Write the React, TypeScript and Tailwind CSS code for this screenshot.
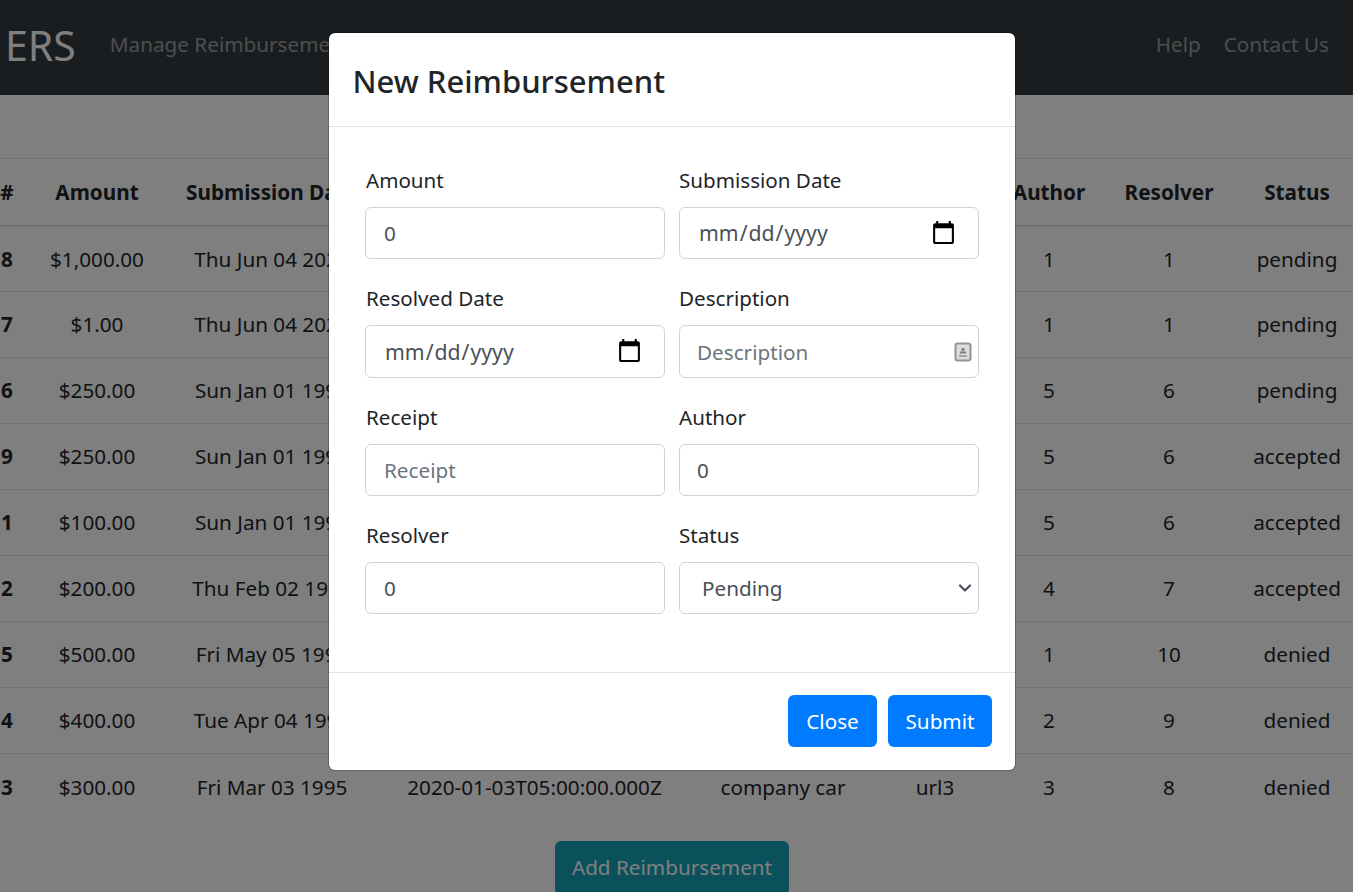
import React from "react";

const widths = [14, 166, 184, 341, 156, 148, 80, 160, 96, 8];
const head = ["#", "Amount", "Submission Date", "Resolved Date", "Description", "Receipt", "Author", "Resolver", "Status", ""];
const rows = [
  ["8", "$1,000.00", "Thu Jun 04 2020", "", "", "", "1", "1", "pending", ""],
  ["7", "$1.00", "Thu Jun 04 2020", "", "", "", "1", "1", "pending", ""],
  ["6", "$250.00", "Sun Jan 01 1995", "", "", "", "5", "6", "pending", ""],
  ["9", "$250.00", "Sun Jan 01 1995", "", "", "", "5", "6", "accepted", ""],
  ["1", "$100.00", "Sun Jan 01 1995", "", "", "", "5", "6", "accepted", ""],
  ["2", "$200.00", "Thu Feb 02 1995", "", "", "", "4", "7", "accepted", ""],
  ["5", "$500.00", "Fri May 05 1995", "", "", "", "1", "10", "denied", ""],
  ["4", "$400.00", "Tue Apr 04 1995", "", "", "", "2", "9", "denied", ""],
  ["3", "$300.00", "Fri Mar 03 1995", "2020-01-03T05:00:00.000Z", "company car", "url3", "3", "8", "denied", ""],
];

const boxCls =
  "block w-[300px] h-[52.2px] rounded-[6px] border border-[#ced4da] bg-white pr-[18px] text-[20.7px] text-[#495057] placeholder:text-[#6c757d] outline-none";
const inputCls = `${boxCls} pl-[18px]`;
const inputTightCls = `${boxCls} pl-[17px]`;
const dateCls =
  "block w-[300px] h-[52.2px] rounded-[6px] border border-[#ced4da] bg-white pl-[18px] pr-[21px] text-[21.2px] text-[#495057] outline-none [&::-webkit-calendar-picker-indicator]:h-[27px] [&::-webkit-calendar-picker-indicator]:w-[27px] [&::-webkit-calendar-picker-indicator]:m-0 [&::-webkit-calendar-picker-indicator]:p-0";

function Field({ label, right, children }: { label: string; right?: boolean; children: React.ReactNode }) {
  return (
    <div className="w-[300px]">
      <div className={`mb-[12px] h-[30px] text-[20.6px] leading-[30px] text-[#212529] ${right ? "" : "pl-px"}`}>{label}</div>
      {children}
    </div>
  );
}

export default function App() {
  return (
    <div className="relative h-[892px] w-[1353px] overflow-hidden bg-white font-['Noto_Sans',sans-serif] text-[20.7px] text-[#212529]">
      <nav className="flex h-[95px] items-center bg-[#343a40] pb-[5px]">
        <span className="ml-[5px] text-[41px] leading-none text-white">ERS</span>
        <a className="ml-[34px] text-white/50">Manage Reimbursements</a>
        <div className="ml-auto mr-[24px] flex gap-[23px] text-white/50">
          <a>Help</a>
          <a>Contact Us</a>
        </div>
      </nav>

      <main className="pt-[63px]">
        <table className="w-[1353px] table-fixed border-collapse text-center">
          <colgroup>
            {widths.map((w, i) => (
              <col key={i} style={{ width: w }} />
            ))}
          </colgroup>
          <thead>
            <tr className="h-[67px] border-y border-b-2 border-[#dee2e6]">
              {head.map((h, i) => (
                <th key={i} className="whitespace-nowrap p-0 pt-[2px] font-bold">
                  {h}
                </th>
              ))}
            </tr>
          </thead>
          <tbody>
            {rows.map((r, i) => (
              <tr key={i} className="h-[66px] border-b border-[#dee2e6] last:border-b-0">
                {r.map((c, j) => (
                  <td key={j} className={`whitespace-nowrap p-0 pt-[1px] ${j === 0 ? "font-bold" : ""}`}>
                    {c}
                  </td>
                ))}
              </tr>
            ))}
          </tbody>
        </table>
        <div className="mt-[21px] flex justify-center">
          <button className="ml-[-9px] h-[54px] w-[234px] rounded-[6px] bg-[#17a2b8] text-white">Add Reimbursement</button>
        </div>
      </main>

      <div className="absolute inset-0 bg-black/50" />

      <div className="absolute left-[329px] top-[33px] flex w-[686px] flex-col rounded-[6px] bg-white shadow-[0_0_0_1px_rgba(0,0,0,0.2)]">
        <header className="flex h-[94px] items-center border-b border-[#dee2e6] pl-[23.5px] pt-[3px]">
          <h5 className="text-[31px] font-medium text-[#212529]">New Reimbursement</h5>
        </header>
        <div className="h-[545px] pl-[36px] pt-[38px]">
          <div className="grid grid-cols-[300px_300px] gap-x-[14px] gap-y-[24.2px]">
            <Field label="Amount">
              <input type="number" readOnly value="0" className={inputCls} />
            </Field>
            <Field label="Submission Date" right>
              <input type="date" className={dateCls} />
            </Field>
            <Field label="Resolved Date">
              <input type="date" className={dateCls} />
            </Field>
            <Field label="Description" right>
              <div className="relative">
                <input placeholder="Description" className={`${inputTightCls} pt-[1px]`} />
                <svg viewBox="0 0 18 20" className="absolute right-[7px] top-[17px] h-[20px] w-[18px]">
                  <rect x="1.5" y="1.5" width="15" height="17" rx="2" fill="#dcdcdc" stroke="#949494" strokeWidth="2" />
                  <circle cx="9" cy="7.5" r="1.7" fill="#808080" />
                  <rect x="6" y="9.5" width="6" height="2" fill="#808080" />
                  <rect x="5" y="13" width="8" height="2" fill="#a5a5a5" />
                </svg>
              </div>
            </Field>
            <Field label="Receipt">
              <input placeholder="Receipt" className={inputCls} />
            </Field>
            <Field label="Author" right>
              <input type="number" readOnly value="0" className={inputTightCls} />
            </Field>
            <Field label="Resolver">
              <input type="number" readOnly value="0" className={inputCls} />
            </Field>
            <Field label="Status" right>
              <div className="relative">
                <select className={`${boxCls} appearance-none pl-[22px]`} defaultValue="Pending">
                  <option>Pending</option>
                  <option>Accepted</option>
                  <option>Denied</option>
                </select>
                <svg viewBox="0 0 14 8" className="pointer-events-none absolute right-[7px] top-[22px] h-[8px] w-[14px]" fill="none" stroke="#495057" strokeWidth="2.2" strokeLinecap="round" strokeLinejoin="round">
                  <path d="M2 1.5l5 5 5-5" />
                </svg>
              </div>
            </Field>
          </div>
        </div>
        <footer className="flex h-[98px] items-start justify-end gap-[11px] border-t border-[#dee2e6] pr-[23px] pt-[22px]">
          <button className="h-[52px] w-[89px] rounded-[6px] bg-[#007bff] pt-[2px] text-white">Close</button>
          <button className="h-[52px] w-[104px] rounded-[6px] bg-[#007bff] pt-[2px] text-white">Submit</button>
        </footer>
      </div>
    </div>
  );
}
